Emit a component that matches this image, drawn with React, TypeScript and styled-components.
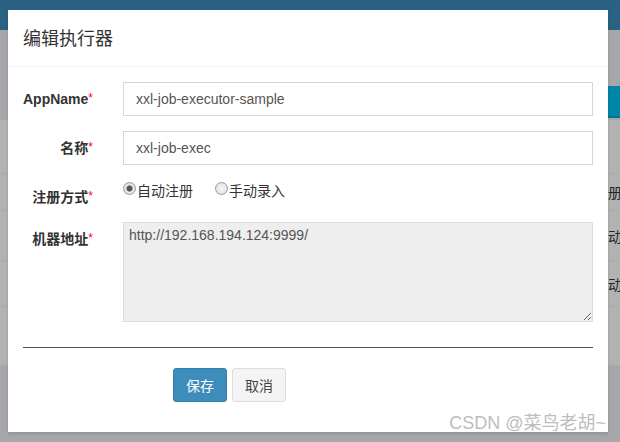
import React from "react";
import styled, { createGlobalStyle } from "styled-components";

const GlobalStyle = createGlobalStyle`
  html, body { margin: 0; padding: 0; }
  body {
    font-family: "Liberation Sans", "Noto Sans CJK SC", Arial, sans-serif;
    font-size: 14px;
    color: #333;
  }
  * { box-sizing: border-box; }
`;

const Page = styled.div`
  position: relative;
  width: 620px;
  height: 442px;
  overflow: hidden;
  background: #ecf0f5;
  display: flex;
  flex-direction: column;
`;

const TopBar = styled.div`
  height: 30px;
  background: #3c8dbc;
  flex: none;
`;

const Toolbar = styled.div`
  display: flex;
  justify-content: flex-end;
  padding-top: 56px;
  flex: none;
`;

const TealButton = styled.div`
  width: 60px;
  height: 32px;
  margin-right: -48px;
  background: #00c0ef;
  border-bottom: 2px solid #00a7d0;
`;

const Box = styled.div`
  margin-top: 2px;
  background: #fff;
  display: flex;
  flex-direction: column;
`;

const TableRow = styled.div<{ $h: number }>`
  height: ${(p) => p.$h}px;
  border-bottom: 1px solid #f4f4f4;
  display: flex;
  justify-content: flex-end;
  align-items: center;
`;

const EdgeCell = styled.div`
  width: 12px;
  overflow: hidden;
  white-space: nowrap;
  font-family: "Noto Sans CJK SC", sans-serif;
  font-size: 14px;
  color: #333;
`;

const Backdrop = styled.div`
  position: absolute;
  inset: 0;
  background: rgba(0, 0, 0, 0.3);
`;

const Modal = styled.div`
  position: absolute;
  left: 8px;
  top: 10px;
  width: 600px;
  background: #fff;
  box-shadow: 0 2px 3px rgba(0, 0, 0, 0.125);
`;

const ModalHeader = styled.div`
  padding: 15px;
  border-bottom: 1px solid #f4f4f4;
`;

const Title = styled.h4`
  margin: 0;
  font-family: "Noto Sans CJK SC", sans-serif;
  font-weight: 400;
  font-size: 18px;
  line-height: 25.7px;
  color: #333;
`;

const ModalBody = styled.div`
  padding: 15px;
  display: flex;
  flex-direction: column;
`;

const FormRow = styled.div<{ $h?: number }>`
  display: grid;
  grid-template-columns: 70px 1fr;
  column-gap: 30px;
  margin-bottom: 15px;
  min-height: ${(p) => (p.$h ? `${p.$h}px` : "auto")};
`;

const Label = styled.label`
  text-align: right;
  font-weight: 700;
  font-size: 14px;
  line-height: 20px;
  padding-top: 7px;
  color: #333;
  white-space: nowrap;
`;

const Req = styled.span`
  color: #f00;
  font-weight: 400;
  font-size: 12px;
  vertical-align: top;
  position: relative;
  top: -1px;
`;

const Input = styled.input`
  width: 100%;
  height: 34px;
  border: 1px solid #d2d6de;
  padding: 6px 12px;
  font-family: "Liberation Sans", Arial, sans-serif;
  font-size: 14px;
  color: #555;
  background: #fff;
  outline: none;
  border-radius: 0;
`;

const RadioGroup = styled.div`
  display: flex;
  align-items: center;
  height: 20px;
`;

const RadioItem = styled.span<{ $first?: boolean }>`
  display: inline-flex;
  align-items: center;
  margin-left: ${(p) => (p.$first ? 0 : 22)}px;
  font-family: "Noto Sans CJK SC", sans-serif;
  font-size: 14px;
  line-height: 20px;
  color: #333;
`;

const RadioDot = styled.span<{ $checked?: boolean }>`
  width: 13px;
  height: 13px;
  margin-right: 1px;
  margin-top: -2px;
  border-radius: 50%;
  border: 1px solid #9a9a9a;
  background: ${(p) =>
    p.$checked
      ? "radial-gradient(circle, #555 0 2.6px, #9a9a9a 3px, #e8e8e8 3.6px, #dcdcdc 100%)"
      : "radial-gradient(circle, #f4f4f4 0, #dedede 100%)"};
  flex: none;
`;

const TextArea = styled.textarea`
  width: 100%;
  height: 100px;
  border: 1px solid #dcdcdc;
  background: #eee;
  padding: 2px 5px;
  font-family: "Liberation Sans", Arial, sans-serif;
  font-size: 14px;
  line-height: 20px;
  color: #555;
  display: block;
  outline: none;
  border-radius: 0;
`;

const Rule = styled.hr`
  width: 100%;
  margin: 10px 0 20px;
  border: 0;
  border-top: 1px solid #555;
`;

const Actions = styled.div`
  display: flex;
  gap: 5px;
  padding-left: 150px;
  margin-bottom: 15px;
`;

const Button = styled.button<{ $primary?: boolean }>`
  height: 34px;
  padding: 6px 12px;
  font-family: "Noto Sans CJK SC", sans-serif;
  font-size: 14px;
  line-height: 20px;
  border-radius: 3px;
  border: 1px solid ${(p) => (p.$primary ? "#367fa9" : "#ddd")};
  background: ${(p) => (p.$primary ? "#3c8dbc" : "#f4f4f4")};
  color: ${(p) => (p.$primary ? "#fff" : "#444")};
  cursor: pointer;
`;

const Watermark = styled.div`
  position: absolute;
  right: 14px;
  top: 412px;
  font-family: "Liberation Sans", "Noto Sans CJK SC", sans-serif;
  font-size: 18px;
  font-weight: 400;
  line-height: 22px;
  color: #bdbdbd;
  white-space: nowrap;
`;

export default function App() {
  return (
    <>
      <GlobalStyle />
      <Page>
        <TopBar />
        <Toolbar>
          <TealButton />
        </Toolbar>
        <Box>
          <TableRow $h={54} />
          <TableRow $h={37}>
            <EdgeCell>册</EdgeCell>
          </TableRow>
          <TableRow $h={50}>
            <EdgeCell>动</EdgeCell>
          </TableRow>
          <TableRow $h={46}>
            <EdgeCell>动</EdgeCell>
          </TableRow>
          <TableRow $h={59} />
        </Box>
        <Backdrop />
        <Modal>
          <ModalHeader>
            <Title>编辑执行器</Title>
          </ModalHeader>
          <ModalBody>
            <FormRow>
              <Label>
                AppName<Req>*</Req>
              </Label>
              <Input readOnly value="xxl-job-executor-sample" />
            </FormRow>
            <FormRow>
              <Label>
                名称<Req>*</Req>
              </Label>
              <Input readOnly value="xxl-job-exec" />
            </FormRow>
            <FormRow $h={27}>
              <Label>
                注册方式<Req>*</Req>
              </Label>
              <RadioGroup>
                <RadioItem $first>
                  <RadioDot $checked />
                  自动注册
                </RadioItem>
                <RadioItem>
                  <RadioDot />
                  手动录入
                </RadioItem>
              </RadioGroup>
            </FormRow>
            <FormRow>
              <Label>
                机器地址<Req>*</Req>
              </Label>
              <TextArea readOnly value="http://192.168.194.124:9999/" />
            </FormRow>
            <Rule />
            <Actions>
              <Button $primary>保存</Button>
              <Button>取消</Button>
            </Actions>
          </ModalBody>
        </Modal>
        <Watermark>CSDN @菜鸟老胡~</Watermark>
      </Page>
    </>
  );
}
